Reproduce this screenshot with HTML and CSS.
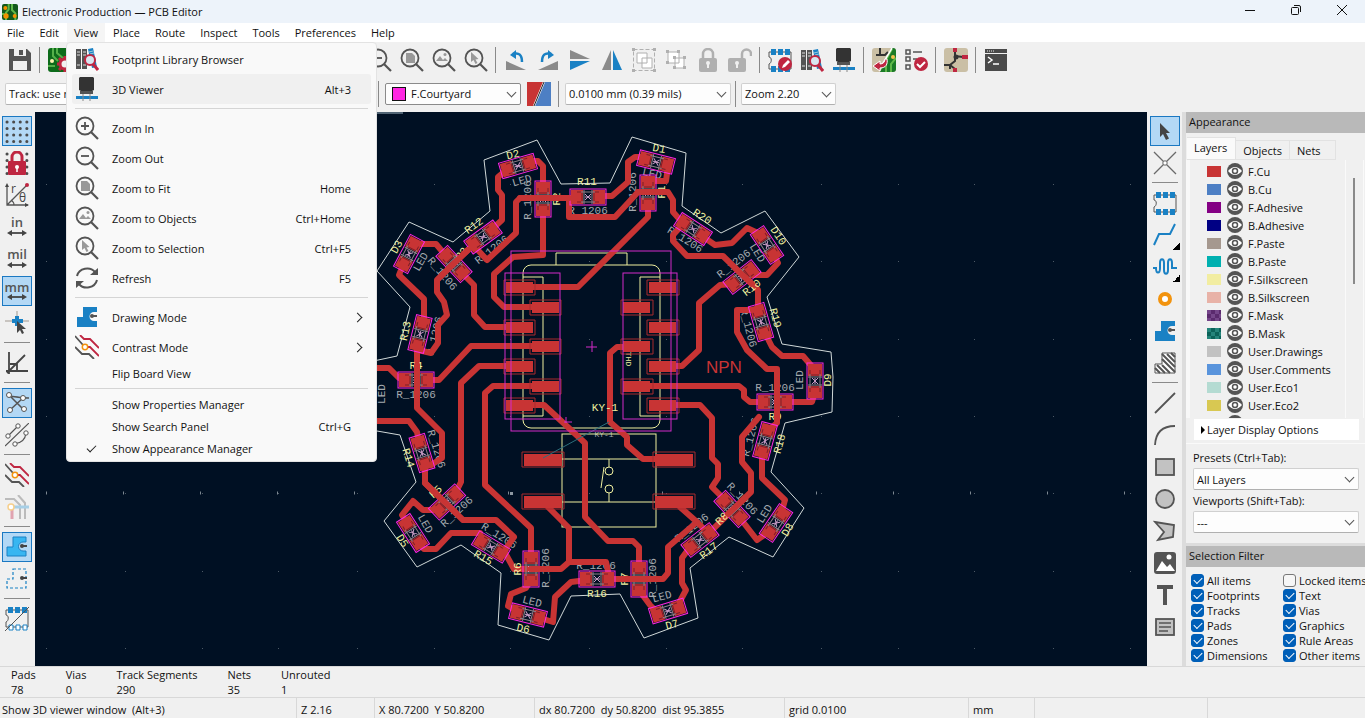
FILE: index.html
```html
<!DOCTYPE html>
<html lang="en">
<head>
  <meta charset="UTF-8" />
  <title>Electronic Production — PCB Editor</title>
  <link rel="stylesheet" href="styles.css">
</head>
<body>
  <!-- icon sprite -->
  <svg class="sprite" aria-hidden="true">
    <symbol id="i-logo" viewBox="0 0 24 24"><rect width="24" height="24" rx="3" fill="#12591c"/><path d="M10 0v8l-4 5v11M15 0v9l5 5v10M0 15h4" fill="none" stroke="#5fb84a" stroke-width="3"/><circle cx="5" cy="6" r="3" fill="#f29100"/><circle cx="6" cy="18" r="4" fill="#f29100"/><circle cx="19" cy="18" r="3" fill="#f29100"/></symbol>
    <symbol id="i-save" viewBox="0 0 24 24"><path d="M1 1h18l4 4v18H1z" fill="#545454"/><path d="M6 1h12v7H6zM5 13h14v9H5z" fill="#f0f0f0"/><path d="M11 2h4v5h-4z" fill="#545454"/></symbol>
    <symbol id="i-setup" viewBox="0 0 24 24"><rect width="24" height="24" rx="3" fill="#0d6b1a"/><path d="M9 0v5l6 5h9M5 0v8l5 5M0 18h7" fill="none" stroke="#54b04a" stroke-width="2"/><circle cx="4" cy="13" r="2" fill="#fff3b0"/><circle cx="17" cy="16" r="5" fill="#f0f0f0" stroke="#bf2641" stroke-width="3"/><path d="M17 8v3M17 21v3M9 16h3M11 10l2 2M11 22l2-2" stroke="#bf2641" stroke-width="3"/></symbol>
    <symbol id="i-page" viewBox="0 0 24 24"><path d="M5 2h10l4 4v16H5z" fill="#fff" stroke="#545454" stroke-width="2"/></symbol>
    <symbol id="i-glass" viewBox="0 0 24 24"><circle cx="10" cy="10" r="8.5" fill="none" stroke="#545454" stroke-width="1.8"/><path d="M16 16l7 7" stroke="#545454" stroke-width="2.2"/></symbol>
    <symbol id="i-zoomin" viewBox="0 0 24 24"><use href="#i-glass"/><path d="M6 10h8M10 6v8" stroke="#545454" stroke-width="1.8"/></symbol>
    <symbol id="i-zoomout" viewBox="0 0 24 24"><use href="#i-glass"/><path d="M6 10h8" stroke="#545454" stroke-width="1.8"/></symbol>
    <symbol id="i-zoomfit" viewBox="0 0 24 24"><use href="#i-glass"/><path d="M6 5h6l3 3v7H6z" fill="#999"/></symbol>
    <symbol id="i-zoomobj" viewBox="0 0 24 24"><use href="#i-glass"/><path d="M4 13l4-5 3 4 2-2 3 3z" fill="#999"/><circle cx="13" cy="6.500" r="1.500" fill="#999"/></symbol>
    <symbol id="i-zoomsel" viewBox="0 0 24 24"><use href="#i-glass"/><path d="M7 4v10l2.500-2 2 4 2-1-2-3.500 3-.5z" fill="#999"/></symbol>
    <symbol id="i-refresh" viewBox="0 0 24 24"><path d="M2 10c2-8 13-10 18-4M22 14c-2 8-13 10-18 4" fill="none" stroke="#545454" stroke-width="2"/><path d="M23 2v7h-8zM1 22v-7h8z" fill="#545454"/></symbol>
    <symbol id="i-rotl" viewBox="0 0 24 24"><path d="M2 13v9h20z" fill="#8a8a8a"/><path d="M9 6c6-2 9 1 9 8" fill="none" stroke="#1a81c4" stroke-width="2.500"/><path d="M6 7l6-5v9z" fill="#1a81c4"/></symbol>
    <symbol id="i-rotr" viewBox="0 0 24 24"><path d="M22 13v9H2z" fill="#8a8a8a"/><path d="M15 6c-6-2-9 1-9 8" fill="none" stroke="#1a81c4" stroke-width="2.500"/><path d="M18 7l-6-5v9z" fill="#1a81c4"/></symbol>
    <symbol id="i-flipv" viewBox="0 0 24 24"><path d="M2 2v9h20z" fill="#8a8a8a"/><path d="M2 22v-9h20z" fill="#1a81c4"/></symbol>
    <symbol id="i-fliph" viewBox="0 0 24 24"><path d="M2 22h9V2z" fill="#8a8a8a"/><path d="M22 22h-9V2z" fill="#1a81c4"/></symbol>
    <symbol id="i-group" viewBox="0 0 24 24"><rect x="1.500" y="1.500" width="21" height="21" fill="none" stroke="#b0b0b0" stroke-dasharray="4 2"/><path d="M0 0h3v3H0zM21 0h3v3h-3zM0 21h3v3H0zM21 21h3v3h-3z" fill="#b0b0b0"/><path d="M5 5h10v10H5zM10 10h10v10H10z" fill="#fff" stroke="#b0b0b0"/></symbol>
    <symbol id="i-ungroup" viewBox="0 0 24 24"><path d="M4 4h11v11H4zM11 10h9v10h-9z" fill="#fff" stroke="#b0b0b0"/><path d="M2 2h3v3H2zM13 2h3v3h-3zM2 13h3v3H2zM9 8h3v3H9zM19 8h3v3h-3zM9 18h3v3H9zM19 18h3v3h-3z" fill="#b0b0b0"/></symbol>
    <symbol id="i-lock" viewBox="0 0 24 24"><path d="M7 12V6a5 5 0 0 1 10 0v6" fill="none" stroke="#b0b0b0" stroke-width="2.500"/><rect x="3" y="10" width="18" height="14" rx="2" fill="#b0b0b0"/><path d="M12 14v6" stroke="#f0f0f0" stroke-width="2"/><circle cx="12" cy="15" r="2" fill="#f0f0f0"/></symbol>
    <symbol id="i-unlock" viewBox="0 0 24 24"><path d="M14 12V6a4 4 0 0 1 9 0v2" fill="none" stroke="#b0b0b0" stroke-width="2.500"/><rect x="0" y="10" width="18" height="14" rx="2" fill="#b0b0b0"/><path d="M9 14v6" stroke="#f0f0f0" stroke-width="2"/><circle cx="9" cy="15" r="2" fill="#f0f0f0"/></symbol>
    <symbol id="i-foot" viewBox="0 0 24 24"><path d="M1 4h22v17H1v-5c3-1 3-7 0-7z" fill="none" stroke="#545454"/><path d="M3 1h5v6H3zM10 1h5v6h-5zM17 1h5v6h-5zM3 18h5v6H3zM10 18h5v6h-5zM17 18h5v6h-5z" fill="#1a81c4"/></symbol>
    <symbol id="i-footedit" viewBox="0 0 24 24"><use href="#i-foot"/><circle cx="17" cy="16" r="7" fill="#bf2641"/><path d="M14 20l1-3 5-5 2 2-5 5z" fill="#fff"/></symbol>
    <symbol id="i-library" viewBox="0 0 24 24"><path d="M1 2h5v20H1zM7 2h5v20H7z" fill="#545454"/><path d="M2 5h3M2 8h3M8 5h3M8 8h3M2 18h3M8 18h3" stroke="#ddd"/><path d="M13 2l5-1 4 19-5 1z" fill="#1a81c4"/><path d="M14 5l4-1M15 7l4-1" stroke="#9cd"/><circle cx="15" cy="13" r="5" fill="#d8e6f0" stroke="#bf2641" stroke-width="2"/><path d="M18 17l5 6" stroke="#bf2641" stroke-width="3"/></symbol>
    <symbol id="i-3d" viewBox="0 0 24 24"><path d="M5 0h13l1 1v12l-2 1H6l-2-1V1z" fill="#333"/><path d="M5 14h13v3H5z" fill="#545454"/><path d="M1 19h22v3H1z" fill="#1a81c4"/><path d="M8 17v7M15 17v7" stroke="#888"/></symbol>
    <symbol id="i-update" viewBox="0 0 24 24"><rect width="24" height="24" rx="3" fill="#cabfa5"/><path d="M20 0h1q3 0 3 3v18q0 3-3 3H8z" fill="#1b7a27"/><path d="M20 1L14 12v12M24 10l-5 6v8" fill="none" stroke="#5fb84a" stroke-width="2"/><path d="M8 0v7M4 7h9l3-3" stroke="#333" stroke-width="2" fill="none"/><path d="M20 0L10 17" stroke="#fff" stroke-width="1.500"/><circle cx="21" cy="9" r="2" fill="#f2c14e"/><path d="M13 11c0 3-2 5-5 5v-3l-7 5 7 5v-3c6 0 8-4 7-9z" fill="#bf2641" stroke="#fff"/></symbol>
    <symbol id="i-drc" viewBox="0 0 24 24"><path d="M2 2h4v4H2zM2 9h4v4H2zM2 17h4v4H2z" fill="none" stroke="#545454" stroke-width="1.500"/><path d="M9 4h9M9 11h4" stroke="#545454" stroke-width="1.500"/><circle cx="17" cy="16" r="7" fill="#bf2641"/><path d="M13 16l3 3 5-5" fill="none" stroke="#fff" stroke-width="2"/></symbol>
    <symbol id="i-sch" viewBox="0 0 24 24"><rect width="24" height="24" rx="3" fill="#cabfa5"/><path d="M11 3v5l8 1M11 8v5l-5 4v4M0 17h6l5 4" stroke="#333" stroke-width="2" fill="none"/><circle cx="12" cy="9" r="2.500" fill="#333"/><path d="M11 0v4M18 9h6M11 20v4" stroke="#bf2641" stroke-width="4"/></symbol>
    <symbol id="i-console" viewBox="0 0 24 24"><path d="M1 1h22v4H1zM1 6h22v17H1z" fill="#4a4a4a"/><path d="M3 3h7" stroke="#eee" stroke-dasharray="1 1"/><path d="M4 9l4 3-4 3M9 16h6" fill="none" stroke="#fff" stroke-width="1.500"/></symbol>
    <symbol id="i-pair" viewBox="0 0 24 24"><path d="M0 0h17L7 24H0z" fill="#c83434"/><path d="M17 0h7v24H7z" fill="#4d7fc4"/><path d="M17 0L7 24" stroke="#fff" stroke-width="2"/><path d="M17 0L7 24" stroke="#222" stroke-width="1"/></symbol>
    <symbol id="i-zone" viewBox="0 0 24 24"><path d="M8 2h14v5h-3a4 4 0 0 0 0 9h3v6H2V12h6z" fill="#1a81c4"/><path d="M16 11h6" stroke="#545454" stroke-width="2"/><circle cx="17" cy="11" r="2" fill="#545454"/></symbol>
    <symbol id="i-zonefill" viewBox="0 0 24 24"><path d="M8 2h13v5h-3a4 4 0 0 0 0 9h3v5H2v-9h6z" fill="#38b6f1" stroke="#1a81c4"/><path d="M16 11h6" stroke="#444" stroke-width="2"/><circle cx="17" cy="11" r="2" fill="#444"/></symbol>
    <symbol id="i-zoneline" viewBox="0 0 24 24"><path d="M8 2h13v19H2v-9h6z" fill="none" stroke="#1a81c4" stroke-width="1.200" stroke-dasharray="3 2"/><path d="M16 11h6" stroke="#444" stroke-width="2"/><circle cx="17" cy="11" r="2" fill="#444"/></symbol>
    <symbol id="i-contrast" viewBox="0 0 24 24"><path d="M0 1l8 9M0 12l7 7h7l5 5" fill="none" stroke="#545454" stroke-width="1.800"/><path d="M5 0l4 4h6l9 9M11 12h4l9 9" fill="none" stroke="#bf2641" stroke-width="1.800"/><circle cx="10" cy="12" r="2.700" fill="#fff" stroke="#f2930e" stroke-width="1.500"/></symbol>
    <symbol id="i-netcolor" viewBox="0 0 24 24"><path d="M0 4h9l6 6v14M13 0l7 8v16" fill="none" stroke="#bbb" stroke-width="2"/><path d="M9 12h15" stroke="#a7cfe6" stroke-width="3"/><path d="M7 14v10" stroke="#e0a3b0" stroke-width="3"/><circle cx="6" cy="12" r="3" fill="#fff" stroke="#f6cf8c" stroke-width="1.500"/></symbol>
    <symbol id="i-grid" viewBox="0 0 24 24"><path d="M2 3h22M2 9.500h22M2 16h22M2 22.500h22" stroke="#4c4c4c" stroke-width="3" stroke-linecap="round" stroke-dasharray="0.100 6.500"/></symbol>
    <symbol id="i-gridlock" viewBox="0 0 24 24"><use href="#i-grid"/><path d="M7 12V6a5 5 0 0 1 10 0v6" fill="#f0f0f0" stroke="#bf2641" stroke-width="3"/><rect x="3" y="10" width="18" height="14" rx="1" fill="#bf2641"/><circle cx="12" cy="16" r="2" fill="#fff"/><path d="M12 16v5" stroke="#fff" stroke-width="1.500"/></symbol>
    <symbol id="i-arrows" viewBox="0 0 24 24"><path d="M4 18h16" stroke="#444" stroke-width="1.800"/><path d="M2 18l5-3v6zM22 18l-5-3v6z" fill="#444"/></symbol>
    <symbol id="i-snap" viewBox="0 0 24 24"><path d="M12 0v8M0 10h24" stroke="#a09890"/><path d="M12 5v10M7 10h11" stroke="#1a81c4" stroke-width="4"/><path d="M12 10v12l3-3 2 4 2-1-2-4h4z" fill="#444"/></symbol>
    <symbol id="i-angle" viewBox="0 0 24 24"><path d="M4 1v22M1 20h22M2 22L20 4M5 13h7v7" fill="none" stroke="#444" stroke-width="1.800"/></symbol>
    <symbol id="i-rats" viewBox="0 0 24 24"><path d="M4 4l14 14M4 5l15 2h5M6 18L18 7" stroke="#545454" stroke-width="1.500"/><g fill="#fff" stroke="#545454"><circle cx="4" cy="4" r="2.500"/><circle cx="18" cy="7" r="2.500"/><circle cx="5" cy="19" r="2.500"/><circle cx="19" cy="18" r="2.500"/></g></symbol>
    <symbol id="i-ratscurve" viewBox="0 0 24 24"><path d="M0 23L24 0M3 13l10-10M9 21q11-1 12-11" fill="none" stroke="#545454" stroke-width="1.200"/><g fill="#fff" stroke="#545454"><circle cx="3" cy="13" r="2.200"/><circle cx="13" cy="3" r="2.200"/><circle cx="10" cy="21" r="2.200"/><circle cx="21" cy="10" r="2.200"/></g></symbol>
    <symbol id="i-padline" viewBox="0 0 24 24"><path d="M1 3h22v17H1v-5c3-1 3-7 0-7z" fill="none" stroke="#545454"/><path d="M3 0h5v6H3zM10 0h5v6h-5zM17 0h5v6h-5z" fill="#1a81c4"/><path d="M4 18h4v5H4zM11 18h4v5h-4zM18 18h4v5h-4z" fill="#fff" stroke="#1a81c4"/><path d="M0 24L24 0" stroke="#545454"/></symbol>
    <symbol id="i-pointer" viewBox="0 0 24 24"><path d="M7 4v14l3-3 3 6 3-1.500-3-5.500h4z" fill="#444"/></symbol>
    <symbol id="i-local" viewBox="0 0 24 24"><path d="M1 1l22 22M23 1L1 23" stroke="#6a6a6a" stroke-width="1.300"/><circle cx="12" cy="12" r="2.200" fill="#fff" stroke="#666"/></symbol>
    <symbol id="i-route" viewBox="0 0 24 24"><path d="M1 22l5-11h11l5-10" fill="none" stroke="#1a81c4" stroke-width="2"/></symbol>
    <symbol id="i-tune" viewBox="0 0 24 24"><path d="M0 13h3c0 6 4 6 4 0V8c0-5 4-5 4 0v7c0 5 4 5 4 0V8c0-5 4-5 4 0v5h5" fill="none" stroke="#1a81c4" stroke-width="2"/></symbol>
    <symbol id="i-via" viewBox="0 0 24 24"><circle cx="12" cy="12" r="5" fill="#fff" stroke="#f2930e" stroke-width="4"/></symbol>
    <symbol id="i-rule" viewBox="0 0 24 24"><path d="M9 2h13v20H2V13h7z" fill="#fff" stroke="#545454"/><path d="M9 3l13 13M9 8l13 13M9 14l8 8M4 14l8 8M2 17l5 5M14 3l8 8M18 2l4 4" stroke="#545454" stroke-width="2"/></symbol>
    <symbol id="i-line" viewBox="0 0 24 24"><path d="M2 22L22 2" stroke="#545454" stroke-width="1.800"/></symbol>
    <symbol id="i-arc" viewBox="0 0 24 24"><path d="M2 22Q3 3 22 3" fill="none" stroke="#545454" stroke-width="1.800"/></symbol>
    <symbol id="i-rect" viewBox="0 0 24 24"><rect x="3" y="4" width="18" height="16" fill="#c2c2c2" stroke="#545454" stroke-width="1.800"/></symbol>
    <symbol id="i-circle" viewBox="0 0 24 24"><circle cx="12" cy="12" r="9" fill="#c2c2c2" stroke="#545454" stroke-width="1.800"/></symbol>
    <symbol id="i-poly" viewBox="0 0 24 24"><path d="M2 3l19 3-1 12-15 3 6-8z" fill="#c2c2c2" stroke="#545454" stroke-width="1.800"/></symbol>
    <symbol id="i-image" viewBox="0 0 24 24"><rect x="1" y="1" width="22" height="22" rx="3" fill="#545454"/><path d="M3 20l6-10 5 6 3-3 5 7z" fill="#fff"/><circle cx="16" cy="6" r="2.500" fill="#fff"/></symbol>
    <symbol id="i-text" viewBox="0 0 24 24"><path d="M4 2h16v4h-6v16h-4V6H4z" fill="#545454"/></symbol>
    <symbol id="i-textbox" viewBox="0 0 24 24"><rect x="3" y="4" width="18" height="16" fill="#c2c2c2" stroke="#545454" stroke-width="1.800"/><path d="M6 8h12M6 12h12M6 16h9" stroke="#545454" stroke-width="1.300"/></symbol>
    <symbol id="i-eye" viewBox="0 0 16 16"><circle cx="8" cy="8" r="8" fill="#545454"/><path d="M1 8q7-8 14 0-7 8-14 0z" fill="#fff"/><circle cx="8" cy="8" r="2.500" fill="#fff" stroke="#545454" stroke-width="1.500"/></symbol>
    <!-- 1206 land pattern -->
    <symbol id="fp" viewBox="-20 -10 40 20" overflow="visible">
      <path d="M-17-7h12V7h-12zM5-7h12V7H5z" fill="#c83434"/>
      <path d="M-11-5h5V5h-5M11-5H6V5h5" fill="none" stroke="#7d1f27"/>
      <path d="M-7-5H7M-7 5H7M-4-7v14M4-7v14" stroke="#8f8288" stroke-width="1" fill="none"/>
      <path d="M-3-3l6 6M-3 3l6-6M-3 0h6" stroke="#c79bc4" stroke-width="1"/>
      <rect x="-18" y="-8" width="36" height="16" fill="none" stroke="#ff26e2"/>
    </symbol>
  </svg>

  <header class="titlebar">
    <svg class="logo"><use href="#i-logo"/></svg>
    <h1>Electronic Production — PCB Editor</h1>
    <div class="window-buttons">
      <button aria-label="Minimize"><svg viewBox="0 0 12 12"><path d="M1 6.500h10"/></svg></button>
      <button aria-label="Restore"><svg viewBox="0 0 12 12"><rect x="1.500" y="3.500" width="7" height="7" rx="1"/><path d="M4 1.500h5q1.500 0 1.500 1.500v5"/></svg></button>
      <button aria-label="Close"><svg viewBox="0 0 12 12"><path d="M1 1l10 10M11 1L1 11"/></svg></button>
    </div>
  </header>

  <nav class="menubar">
    <button>File</button><button>Edit</button>
    <div class="menu-holder">
      <button class="open">View</button>
      <div class="menu">
        <button class="item"><svg><use href="#i-library"/></svg><span>Footprint Library Browser</span></button>
        <button class="item hover"><svg><use href="#i-3d"/></svg><span>3D Viewer</span><kbd>Alt+3</kbd></button>
        <hr>
        <button class="item"><svg><use href="#i-zoomin"/></svg><span>Zoom In</span></button>
        <button class="item"><svg><use href="#i-zoomout"/></svg><span>Zoom Out</span></button>
        <button class="item"><svg><use href="#i-zoomfit"/></svg><span>Zoom to Fit</span><kbd>Home</kbd></button>
        <button class="item"><svg><use href="#i-zoomobj"/></svg><span>Zoom to Objects</span><kbd>Ctrl+Home</kbd></button>
        <button class="item"><svg><use href="#i-zoomsel"/></svg><span>Zoom to Selection</span><kbd>Ctrl+F5</kbd></button>
        <button class="item"><svg><use href="#i-refresh"/></svg><span>Refresh</span><kbd>F5</kbd></button>
        <hr>
        <button class="item sub"><svg><use href="#i-zone"/></svg><span>Drawing Mode</span></button>
        <button class="item sub"><svg><use href="#i-contrast"/></svg><span>Contrast Mode</span></button>
        <button class="item short"><span>Flip Board View</span></button>
        <hr>
        <button class="item short"><span>Show Properties Manager</span></button>
        <button class="item short"><span>Show Search Panel</span><kbd>Ctrl+G</kbd></button>
        <button class="item short checked"><span>Show Appearance Manager</span></button>
      </div>
    </div>
    <button>Place</button><button>Route</button><button>Inspect</button><button>Tools</button><button>Preferences</button><button>Help</button>
  </nav>

  <div class="toolbar">
    <button aria-label="Save"><svg><use href="#i-save"/></svg></button>
    <i class="sep"></i>
    <button aria-label="Board setup"><svg><use href="#i-setup"/></svg></button>
    <i class="sep"></i>
    <button aria-label="Page settings"><svg><use href="#i-page"/></svg></button>
    <button aria-label="Print"><svg><use href="#i-page"/></svg></button>
    <button aria-label="Plot"><svg><use href="#i-page"/></svg></button>
    <i class="sep"></i>
    <button aria-label="Undo"><svg><use href="#i-rotl"/></svg></button>
    <button aria-label="Redo"><svg><use href="#i-rotr"/></svg></button>
    <i class="sep"></i>
    <button aria-label="Find"><svg><use href="#i-glass"/></svg></button>
    <i class="sep"></i>
    <button aria-label="Refresh"><svg><use href="#i-refresh"/></svg></button>
    <button aria-label="Zoom in"><svg><use href="#i-zoomin"/></svg></button>
    <button aria-label="Zoom out"><svg><use href="#i-zoomout"/></svg></button>
    <button aria-label="Zoom to fit"><svg><use href="#i-zoomfit"/></svg></button>
    <button aria-label="Zoom to objects"><svg><use href="#i-zoomobj"/></svg></button>
    <button aria-label="Zoom to selection"><svg><use href="#i-zoomsel"/></svg></button>
    <i class="sep"></i>
    <button aria-label="Rotate left"><svg><use href="#i-rotl"/></svg></button>
    <button aria-label="Rotate right"><svg><use href="#i-rotr"/></svg></button>
    <button aria-label="Mirror vertically"><svg><use href="#i-flipv"/></svg></button>
    <button aria-label="Mirror horizontally"><svg><use href="#i-fliph"/></svg></button>
    <button aria-label="Group"><svg><use href="#i-group"/></svg></button>
    <button aria-label="Ungroup"><svg><use href="#i-ungroup"/></svg></button>
    <button aria-label="Lock"><svg><use href="#i-lock"/></svg></button>
    <button aria-label="Unlock"><svg><use href="#i-unlock"/></svg></button>
    <i class="sep"></i>
    <button aria-label="Footprint editor"><svg><use href="#i-footedit"/></svg></button>
    <button aria-label="Footprint library"><svg><use href="#i-library"/></svg></button>
    <button aria-label="3D viewer"><svg><use href="#i-3d"/></svg></button>
    <i class="sep"></i>
    <button aria-label="Update from schematic"><svg><use href="#i-update"/></svg></button>
    <button aria-label="Design rules checker"><svg><use href="#i-drc"/></svg></button>
    <i class="sep"></i>
    <button aria-label="Schematic editor"><svg><use href="#i-sch"/></svg></button>
    <i class="sep"></i>
    <button aria-label="Scripting console"><svg><use href="#i-console"/></svg></button>
  </div>

  <div class="toolbar options">
    <div class="select track"><select aria-label="Track width"><option>Track: use netclass width</option></select></div>
    <div class="select via"><select aria-label="Via size"><option>Via: use netclass sizes</option></select></div>
    <i class="sep"></i>
    <div class="select layer"><i class="swatch c-court"></i><select aria-label="Active layer"><option>F.Courtyard</option></select></div>
    <button class="pair" aria-label="Layer pair"><svg><use href="#i-pair"/></svg></button>
    <i class="sep"></i>
    <div class="select gridsize"><select aria-label="Grid"><option>0.0100 mm (0.39 mils)</option></select></div>
    <i class="sep"></i>
    <div class="select zoom"><select aria-label="Zoom"><option>Zoom 2.20</option></select></div>
  </div>

  <main class="workspace">
    <div class="tools">
      <button class="on" aria-label="Show grid"><svg><use href="#i-grid"/></svg></button>
      <button aria-label="Grid overrides"><svg><use href="#i-gridlock"/></svg></button>
      <button aria-label="Polar coordinates"><svg viewBox="0 0 24 24"><path d="M2 2v20h21M2 22L22 2M6 17q3 2 3 5" fill="none" stroke="#545454" stroke-width="1.300"/><path d="M0 4l2-4 2 4zM20 20l4 2-4 2z" fill="#444"/><circle cx="22" cy="2" r="2" fill="#bf2641"/><text x="6" y="10" font-size="12" fill="#444">r</text><text x="14" y="19" font-size="12" fill="#444">θ</text></svg></button>
      <button class="unit"><span>in</span><svg><use href="#i-arrows"/></svg></button>
      <button class="unit"><span>mil</span><svg><use href="#i-arrows"/></svg></button>
      <button class="unit on"><span>mm</span><svg><use href="#i-arrows"/></svg></button>
      <button aria-label="Crosshair"><svg><use href="#i-snap"/></svg></button>
      <hr>
      <button aria-label="Limit to 45 degrees"><svg><use href="#i-angle"/></svg></button>
      <hr>
      <button class="on" aria-label="Show ratsnest"><svg><use href="#i-rats"/></svg></button>
      <button aria-label="Curved ratsnest"><svg><use href="#i-ratscurve"/></svg></button>
      <hr>
      <button aria-label="High contrast"><svg><use href="#i-contrast"/></svg></button>
      <button aria-label="Net highlight"><svg><use href="#i-netcolor"/></svg></button>
      <hr>
      <button class="on" aria-label="Filled zones"><svg><use href="#i-zonefill"/></svg></button>
      <button aria-label="Zone outlines"><svg><use href="#i-zoneline"/></svg></button>
      <hr>
      <button aria-label="Sketch pads"><svg><use href="#i-padline"/></svg></button>
    </div>

    <svg class="board" viewBox="35 112 1112 554" preserveAspectRatio="xMinYMin slice">
      <defs>
        <pattern id="dots" x="46" y="184" width="232" height="232" patternUnits="userSpaceOnUse">
          <path d="M0 0h1v1H0zM79 0h1v1h-1zM156 0h1v1h-1zM0 77h1v1H0zM79 77h1v1h-1zM156 77h1v1h-1zM0 155h1v1H0zM79 155h1v1h-1zM156 155h1v1h-1z" fill="#4d5a66"/>
        </pattern>
      </defs>
      <rect x="35" y="112" width="1112" height="554" fill="#001023"/>
      <rect x="35" y="112" width="1112" height="554" fill="url(#dots)"/>
      <path d="M46 493h1110" stroke="#7d8892" stroke-width="3" stroke-dasharray="1 76"/>
      <path d="M510 492h3v3h-3z" fill="#8d98a2"/>
      <path d="M377 113h26" stroke="#9fb6c4"/>

      <path class="edge" d="M377 271L409 222L453 242L490 211L484 160L537 140L561 184L610 183L632 137L686 153L682 206L721 233L765 211L799 257L767 297L782 344L831 352L833 377L832 412L785 423L771 472L804 508L773 557L729 537L690 568L698 618L644 638L620 594L571 596L549 640L498 625L501 573L461 545L417 567L384 521L416 482L400 435L377 431L348 424L350 366L397 356L410 307Z"/>

      <!-- fab values -->
      <g class="fab">
        <text transform="translate(522 181) rotate(-16)">LED</text>
        <text transform="translate(528 200) rotate(-90)">R_1206</text>
        <text transform="translate(588 211)">R_1206</text>
        <text transform="translate(492 250) rotate(-38)">R_1206</text>
        <text transform="translate(442 274) rotate(50)">R_1206</text>
        <text transform="translate(421 262) rotate(-60)">LED</text>
        <text transform="translate(435 336) rotate(-76)">R_1206</text>
        <text transform="translate(416 395)">R_1206</text>
        <text transform="translate(436 449) rotate(73)">R_1206</text>
        <text transform="translate(457 512) rotate(-43)">R_1206</text>
        <text transform="translate(425 524) rotate(60)">LED</text>
        <text transform="translate(499 536) rotate(32)">R_1206</text>
        <text transform="translate(546 568) rotate(-90)">R_1206</text>
        <text transform="translate(532 602) rotate(14)">LED</text>
        <text transform="translate(596 566)">R_1206</text>
        <text transform="translate(653 578) rotate(-90)">R_1206</text>
        <text transform="translate(662 597) rotate(-15)">LED</text>
        <text transform="translate(692 528) rotate(-38)">R_1206</text>
        <text transform="translate(742 499) rotate(47)">R_1206</text>
        <text transform="translate(765 514) rotate(-58)">LED</text>
        <text transform="translate(751 437) rotate(-75)">R_1206</text>
        <text transform="translate(775 388)">R_1206</text>
        <text transform="translate(800 380) rotate(-90)">LED</text>
        <text transform="translate(748 328) rotate(75)">R_1206</text>
        <text transform="translate(734 264) rotate(-38)">R_1206</text>
        <text transform="translate(757 253) rotate(58)">LED</text>
        <text transform="translate(685 240) rotate(32)">R_1206</text>
        <text transform="translate(652 174) rotate(13)">LED</text>
        <text transform="translate(633 192) rotate(-90)">R_1206</text>
        <text transform="translate(382 394) rotate(-90)">LED</text>
        <text class="small" transform="translate(604 434)">KY-1</text>
      </g>

      <!-- silkscreen -->
      <g class="silk">
        <rect x="523" y="265" width="137" height="163" rx="8"/>
        <path d="M556 265v-12h71v12M523 277h20v139h-20M660 277h-20v139h20"/>
        <rect x="562" y="434" width="94" height="93"/>
        <path d="M562 459h94M562 502h94M609 459v8M609 493v9M604 467l-3 21"/>
        <circle cx="609" cy="471" r="4"/><circle cx="609" cy="489" r="4"/>
      </g>

      <!-- copper tracks -->
      <g class="copper">
        <path d="M530 161H538L543 166V187M504 172L498 177V190L502 195V220L490 231"/>
        <path d="M476 248L487 260L516 233V202L520 198H576M569 198V217H615L628 203L638 192H668L673 200V212L682 222"/>
        <path d="M600 196H612L628 182V162L635 157H645M668 166L666 181H648"/>
        <path d="M648 207V217L578 287H519M543 211V255L513 257L494 274V297L504 307H546"/>
        <path d="M473 245L437 280V292L444 302L447 315L438 325V343L431 353L418 350M415 244H436L447 257"/>
        <path d="M462 273L474 285V315L485 327H519M403 265L399 275L424 299V322"/>
        <path d="M417 345V408L442 433V458L431 465M376 368H389L399 378H405M427 380H439L471 346H546"/>
        <path d="M519 366H479L461 383V482L455 494M546 386H493L485 393V485L531 528V558"/>
        <path d="M519 405H544L585 443V517L608 541H633L639 547V568M376 421H409L417 432L419 442"/>
        <path d="M425 463V483L463 520H496L514 537L504 551L514 569H561L569 562V528L548 507M569 562H606L609 575"/>
        <path d="M407 523L402 515L413 501L423 510H438M419 543L424 549H436L451 533H480"/>
        <path d="M531 580L526 588L511 594L508 606L517 611M540 618L553 622L555 597L571 582L587 580"/>
        <path d="M607 579H663L668 573V547L697 522L680 507M637 347H617L610 353V422L627 437V445L643 459H675"/>
        <path d="M637 386H739L744 390V397L750 402H765M663 405H700L712 418V458L718 464V478L712 487L724 499"/>
        <path d="M785 402H812L815 392M684 223L673 235V241L687 256H723L758 290V310"/>
        <path d="M702 236L715 245L732 243L747 228L760 234M774 255L778 263L767 275H752M733 284L720 285L699 303V350L682 366H663"/>
        <path d="M757 310H737V332L747 350L767 369H777V423L768 430M765 333L772 347L782 356H803L815 370"/>
        <path d="M759 417L742 437V462L751 473V492L710 532M762 450V478L785 500L781 514M770 531L757 540L740 518"/>
        <path d="M690 547L682 558V583L686 590L678 605M639 590L650 605L658 613M697 522L708 533"/>
      </g>
      <text class="npn" x="706" y="373">NPN</text>

      <!-- reference designators -->
      <g class="ref">
        <text transform="translate(513 155) rotate(-14)">D2</text>
        <text transform="translate(557 199) rotate(-90)">R2</text>
        <text transform="translate(587 182)">R11</text>
        <text transform="translate(474 226) rotate(-36)">R12</text>
        <text transform="translate(462 254) rotate(-50)">R3</text>
        <text transform="translate(397 247) rotate(-62)">D3</text>
        <text transform="translate(406 331) rotate(-78)">R13</text>
        <text transform="translate(416 366)">R4</text>
        <text transform="translate(408 458) rotate(73)">R14</text>
        <text transform="translate(436 492) rotate(-43)">R5</text>
        <text transform="translate(402 541) rotate(58)">D5</text>
        <text transform="translate(483 558) rotate(30)">R15</text>
        <text transform="translate(518 569) rotate(-90)">R6</text>
        <text transform="translate(523 629) rotate(12)">D6</text>
        <text transform="translate(597 594)">R16</text>
        <text transform="translate(625 579) rotate(-90)">R7</text>
        <text transform="translate(672 625) rotate(-15)">D7</text>
        <text transform="translate(709 551) rotate(-38)">R17</text>
        <text transform="translate(722 519) rotate(-45)">R8</text>
        <text transform="translate(788 530) rotate(-58)">D8</text>
        <text transform="translate(780 444) rotate(-75)">R18</text>
        <text transform="translate(775 417)">R9</text>
        <text transform="translate(828 380) rotate(-90)">D9</text>
        <text transform="translate(775 318) rotate(75)">R19</text>
        <text transform="translate(752 288) rotate(-38)">R10</text>
        <text transform="translate(778 236) rotate(56)">D10</text>
        <text transform="translate(702 217) rotate(32)">R20</text>
        <text transform="translate(659 149) rotate(10)">D1</text>
        <text transform="translate(662 192) rotate(-90)">R1</text>
        <text transform="translate(605 408)">KY-1</text>
        <text class="small" transform="translate(628 359) rotate(90)">THD</text>
      </g>

      <g class="pads">
        <path d="M506 282h27v11h-27zM532 302h27v11h-27zM506 322h27v11h-27zM532 341h27v11h-27zM506 361h27v11h-27zM532 381h27v11h-27zM506 400h27v11h-27z"/>
        <path d="M649 282h27v11h-27zM623 302h27v11h-27zM649 322h27v11h-27zM623 341h27v11h-27zM649 361h27v11h-27zM623 381h27v11h-27zM649 400h27v11h-27z"/>
        <path d="M524 454h38v12h-38zM524 496h38v12h-38zM655 454h38v12h-38zM655 496h38v12h-38z"/>
        <path class="mask" d="M504 280h31v15h-31zM530 300h31v15h-31zM504 320h31v15h-31zM530 339h31v15h-31zM504 359h31v15h-31zM530 379h31v15h-31zM504 398h31v15h-31zM647 280h32v15h-32zM621 300h32v15h-32zM647 320h32v15h-32zM621 339h32v15h-32zM647 359h32v15h-32zM621 379h32v15h-32zM647 398h32v15h-32zM522 452h42v15h-42zM522 494h42v15h-42zM653 452h42v15h-42zM653 494h42v15h-42z"/>
      </g>

      <g>
        <use href="#fp" x="-20" y="-10" width="40" height="20" transform="translate(518 166) rotate(-16)"/>
        <use href="#fp" x="-20" y="-10" width="40" height="20" transform="translate(543 199) rotate(90)"/>
        <use href="#fp" x="-20" y="-10" width="40" height="20" transform="translate(588 197)"/>
        <use href="#fp" x="-20" y="-10" width="40" height="20" transform="translate(483 237) rotate(-36)"/>
        <use href="#fp" x="-20" y="-10" width="40" height="20" transform="translate(454 264) rotate(47)"/>
        <use href="#fp" x="-20" y="-10" width="40" height="20" transform="translate(409 254) rotate(118)"/>
        <use href="#fp" x="-20" y="-10" width="40" height="20" transform="translate(420 334) rotate(104)"/>
        <use href="#fp" x="-20" y="-10" width="40" height="20" transform="translate(416 380)"/>
        <use href="#fp" x="-20" y="-10" width="40" height="20" transform="translate(422 453) rotate(73)"/>
        <use href="#fp" x="-20" y="-10" width="40" height="20" transform="translate(447 502) rotate(-43)"/>
        <use href="#fp" x="-20" y="-10" width="40" height="20" transform="translate(413 533) rotate(57)"/>
        <use href="#fp" x="-20" y="-10" width="40" height="20" transform="translate(491 547) rotate(31)"/>
        <use href="#fp" x="-20" y="-10" width="40" height="20" transform="translate(531 569) rotate(90)"/>
        <use href="#fp" x="-20" y="-10" width="40" height="20" transform="translate(528 615) rotate(14)"/>
        <use href="#fp" x="-20" y="-10" width="40" height="20" transform="translate(597 579)"/>
        <use href="#fp" x="-20" y="-10" width="40" height="20" transform="translate(639 579) rotate(90)"/>
        <use href="#fp" x="-20" y="-10" width="40" height="20" transform="translate(668 611) rotate(-17)"/>
        <use href="#fp" x="-20" y="-10" width="40" height="20" transform="translate(700 540) rotate(-38)"/>
        <use href="#fp" x="-20" y="-10" width="40" height="20" transform="translate(732 509) rotate(47)"/>
        <use href="#fp" x="-20" y="-10" width="40" height="20" transform="translate(776 523) rotate(124)"/>
        <use href="#fp" x="-20" y="-10" width="40" height="20" transform="translate(765 441) rotate(105)"/>
        <use href="#fp" x="-20" y="-10" width="40" height="20" transform="translate(775 402)"/>
        <use href="#fp" x="-20" y="-10" width="40" height="20" transform="translate(815 381) rotate(90)"/>
        <use href="#fp" x="-20" y="-10" width="40" height="20" transform="translate(761 322) rotate(74)"/>
        <use href="#fp" x="-20" y="-10" width="40" height="20" transform="translate(742 277) rotate(-38)"/>
        <use href="#fp" x="-20" y="-10" width="40" height="20" transform="translate(767 245) rotate(56)"/>
        <use href="#fp" x="-20" y="-10" width="40" height="20" transform="translate(693 229) rotate(33)"/>
        <use href="#fp" x="-20" y="-10" width="40" height="20" transform="translate(656 162) rotate(14)"/>
        <use href="#fp" x="-20" y="-10" width="40" height="20" transform="translate(648 193) rotate(90)"/>
      </g>
      <!-- tracks that cross a resistor body -->
      <g class="copper">
        <path d="M520 198H569M638 192H664M417 365V400M448 269L468 250M425 483L456 513M531 569H550M620 579H660M777 380V420M728 514L745 498M735 268L752 284"/>
      </g>

      <path d="M543 458L609 422" stroke="#2c6f7c"/>
      <g class="court">
        <rect x="511" y="251" width="160" height="180"/>
        <rect x="505" y="273" width="55" height="146"/>
        <rect x="623" y="273" width="54" height="146"/>
        <path d="M592 341v11M586 347h11M566 417v6M564 422h8"/>
      </g>
    </svg>

    <div class="tools right">
      <button class="on" aria-label="Select"><svg><use href="#i-pointer"/></svg></button>
      <button aria-label="Local ratsnest"><svg><use href="#i-local"/></svg></button>
      <hr>
      <button aria-label="Add footprint"><svg><use href="#i-foot"/></svg></button>
      <button class="more" aria-label="Route tracks"><svg><use href="#i-route"/></svg></button>
      <button class="more" aria-label="Tune length"><svg><use href="#i-tune"/></svg></button>
      <button aria-label="Add via"><svg><use href="#i-via"/></svg></button>
      <button aria-label="Add zone"><svg><use href="#i-zone"/></svg></button>
      <button aria-label="Add rule area"><svg><use href="#i-rule"/></svg></button>
      <hr>
      <button aria-label="Draw line"><svg><use href="#i-line"/></svg></button>
      <button aria-label="Draw arc"><svg><use href="#i-arc"/></svg></button>
      <button aria-label="Draw rectangle"><svg><use href="#i-rect"/></svg></button>
      <button aria-label="Draw circle"><svg><use href="#i-circle"/></svg></button>
      <button aria-label="Draw polygon"><svg><use href="#i-poly"/></svg></button>
      <button aria-label="Add image"><svg><use href="#i-image"/></svg></button>
      <button aria-label="Add text"><svg><use href="#i-text"/></svg></button>
      <button aria-label="Add text box"><svg><use href="#i-textbox"/></svg></button>
    </div>

    <aside class="side">
      <h2>Appearance</h2>
      <div class="tabs">
        <button class="active">Layers</button><button>Objects</button><button>Nets</button>
      </div>
      <div class="layers">
        <ul>
          <li><i class="c-fcu"></i><svg><use href="#i-eye"/></svg>F.Cu</li>
          <li><i class="c-bcu"></i><svg><use href="#i-eye"/></svg>B.Cu</li>
          <li><i class="c-fadh"></i><svg><use href="#i-eye"/></svg>F.Adhesive</li>
          <li><i class="c-badh"></i><svg><use href="#i-eye"/></svg>B.Adhesive</li>
          <li><i class="c-fpaste"></i><svg><use href="#i-eye"/></svg>F.Paste</li>
          <li><i class="c-bpaste"></i><svg><use href="#i-eye"/></svg>B.Paste</li>
          <li><i class="c-fsilk"></i><svg><use href="#i-eye"/></svg>F.Silkscreen</li>
          <li><i class="c-bsilk"></i><svg><use href="#i-eye"/></svg>B.Silkscreen</li>
          <li><i class="c-fmask"></i><svg><use href="#i-eye"/></svg>F.Mask</li>
          <li><i class="c-bmask"></i><svg><use href="#i-eye"/></svg>B.Mask</li>
          <li><i class="c-draw"></i><svg><use href="#i-eye"/></svg>User.Drawings</li>
          <li><i class="c-comm"></i><svg><use href="#i-eye"/></svg>User.Comments</li>
          <li><i class="c-eco1"></i><svg><use href="#i-eye"/></svg>User.Eco1</li>
          <li><i class="c-eco2"></i><svg><use href="#i-eye"/></svg>User.Eco2</li>
          <li><i></i><svg><use href="#i-eye"/></svg></li>
        </ul>
        <div class="scroll"><i></i></div>
      </div>
      <button class="display-options">Layer Display Options</button>
      <div class="presets">
        <label for="presets">Presets (Ctrl+Tab):</label>
        <div class="select"><select id="presets"><option>All Layers</option></select></div>
        <label for="viewports">Viewports (Shift+Tab):</label>
        <div class="select"><select id="viewports"><option>---</option></select></div>
      </div>
      <h2 class="filter-title">Selection Filter</h2>
      <div class="filter">
        <label><input type="checkbox" checked>All items</label>
        <label><input type="checkbox">Locked items</label>
        <label><input type="checkbox" checked>Footprints</label>
        <label><input type="checkbox" checked>Text</label>
        <label><input type="checkbox" checked>Tracks</label>
        <label><input type="checkbox" checked>Vias</label>
        <label><input type="checkbox" checked>Pads</label>
        <label><input type="checkbox" checked>Graphics</label>
        <label><input type="checkbox" checked>Zones</label>
        <label><input type="checkbox" checked>Rule Areas</label>
        <label><input type="checkbox" checked>Dimensions</label>
        <label><input type="checkbox" checked>Other items</label>
      </div>
    </aside>
  </main>

  <dl class="info">
    <div><dt>Pads</dt><dd>78</dd></div>
    <div><dt>Vias</dt><dd>0</dd></div>
    <div><dt>Track Segments</dt><dd>290</dd></div>
    <div><dt>Nets</dt><dd>35</dd></div>
    <div><dt>Unrouted</dt><dd>1</dd></div>
  </dl>
  <footer class="status">
    <span class="s-msg">Show 3D viewer window&nbsp; (Alt+3)</span>
    <span class="s-z">Z 2.16</span>
    <span class="s-xy">X 80.7200&nbsp; Y 50.8200</span>
    <span class="s-d">dx 80.7200&nbsp; dy 50.8200&nbsp; dist 95.3855</span>
    <span class="s-grid">grid 0.0100</span>
    <span class="s-unit">mm</span>
    <span class="s-a"></span>
    <span class="s-b"></span>
  </footer>
</body>
</html>
```
FILE: styles.css
```css
* {
  box-sizing: border-box;
}

body {
  margin: 0;
  height: 100vh;
  display: flex;
  flex-direction: column;
  overflow: hidden;
  background: #f0f0f0;
  color: #111;
  font-family: "Open Sans", "Noto Sans", sans-serif;
  font-size: 11px;
  line-height: 15px;
}

button, select, input, kbd {
  font: inherit;
  color: inherit;
}

button {
  border: none;
  background: none;
  padding: 0;
  white-space: nowrap;
}

hr {
  border: none;
  margin: 0;
}

.sprite {
  position: absolute;
  width: 0;
  height: 0;
}

/* title bar */
.titlebar {
  display: flex;
  align-items: center;
  height: 23px;
  flex: none;
  padding-left: 2px;
  background: #edf3fa;
}

.logo {
  width: 16px;
  height: 16px;
}

.titlebar h1 {
  flex: 1;
  margin: 0 0 0 4px;
  font-size: 11px;
  font-weight: normal;
}

.window-buttons {
  display: flex;
}

.window-buttons button {
  width: 46px;
  height: 20px;
}

.window-buttons svg {
  width: 12px;
  height: 12px;
  fill: none;
  stroke: #111;
}

/* menu bar */
.menubar {
  display: flex;
  flex: none;
  gap: 1px;
  height: 19px;
  background: #fff;
}

.menubar > button,
.menu-holder > button {
  height: 19px;
  padding: 0 7px;
}

.menubar .open {
  background: #f5f5f5;
}

.menu-holder {
  position: relative;
}

.menu {
  position: absolute;
  z-index: 5;
  top: 19px;
  left: -1px;
  width: 311px;
  padding: 1px 5px 2px;
  background: #f9f9f9;
  border: 1px solid #e3e3e3;
  border-radius: 4px;
}

.menu hr {
  height: 9px;
  margin: 0 3px;
  background: linear-gradient(#d5d5d5, #d5d5d5) center / 100% 1px no-repeat;
}

.item {
  position: relative;
  display: flex;
  align-items: center;
  width: 100%;
  height: 30px;
  padding: 0 20px 0 3px;
  border-radius: 3px;
  text-align: left;
}

.item.hover {
  background: #f0f0f0;
}

.item svg {
  width: 24px;
  height: 24px;
  margin-right: 13px;
}

.item span {
  flex: 1;
}

.item.short {
  height: 22px;
  padding-left: 40px;
}

.item.sub::after {
  content: "";
  width: 6px;
  height: 6px;
  margin-right: -10px;
  border: solid #222;
  border-width: 1px 1px 0 0;
  transform: rotate(45deg);
}

.item.checked::before {
  content: "";
  position: absolute;
  left: 15px;
  top: 8px;
  width: 8px;
  height: 4px;
  border: solid #222;
  border-width: 0 0 1px 1px;
  transform: rotate(-45deg);
}

/* toolbars */
.toolbar {
  display: flex;
  align-items: center;
  flex: none;
  height: 36px;
  padding-left: 4px;
}

.toolbar button {
  display: flex;
  align-items: center;
  justify-content: center;
  width: 32px;
  height: 32px;
}

.toolbar svg {
  width: 24px;
  height: 24px;
}

.sep {
  width: 8px;
  height: 26px;
  background: linear-gradient(#8a8a8a, #8a8a8a) 3px 0 / 1px 100% no-repeat;
}

.options {
  height: 34px;
  padding-bottom: 3px;
}

.select {
  position: relative;
}

.select select {
  display: block;
  width: 100%;
  height: 22px;
  padding: 0 3px;
  appearance: none;
  background: #fdfdfd;
  border: 1px solid #d0d0d0;
  border-bottom-color: #b0b0b0;
  border-radius: 2px;
}

.select::after {
  content: "";
  position: absolute;
  right: 6px;
  top: 6px;
  width: 6px;
  height: 6px;
  border: solid #555;
  border-width: 0 1px 1px 0;
  transform: rotate(45deg);
  pointer-events: none;
}

.track {
  width: 185px;
  margin-left: 1px;
}

.via {
  width: 180px;
  margin-left: 5px;
}

.layer {
  width: 136px;
  margin: 0 2px;
}

.layer select {
  padding-left: 25px;
  border-color: #8a8a8a;
}

.swatch {
  position: absolute;
  left: 7px;
  top: 4px;
  width: 14px;
  height: 14px;
  border: 1px solid #111;
}

.gridsize {
  width: 166px;
  margin: 0 1px 0 2px;
}

.zoom {
  width: 95px;
  margin-left: 1px;
}

/* workspace */
.workspace {
  display: flex;
  flex: 1;
  min-height: 0;
}

.tools {
  flex: none;
  width: 35px;
  padding: 4px 3px 0 2px;
}

.tools.right {
  width: 39px;
  padding-left: 3px;
  padding-right: 2px;
  border-right: 4px solid #dcdcdc;
}

.tools button {
  position: relative;
  display: flex;
  align-items: center;
  justify-content: center;
  width: 30px;
  height: 30px;
  margin-bottom: 2px;
}

.tools .on {
  background: #b3d8f5;
  border: 1px solid #1a78c2;
}

.tools svg {
  width: 24px;
  height: 24px;
}

.tools hr {
  height: 8px;
  margin-left: 2px;
  width: 26px;
  background: linear-gradient(#8a8a8a, #8a8a8a) 0 2px / 100% 1px no-repeat;
}

.unit span {
  position: absolute;
  left: 0;
  right: 0;
  top: 3px;
  text-align: center;
  font-size: 13px;
  font-weight: 600;
  line-height: 14px;
  color: #555;
}

.more::after {
  content: "";
  position: absolute;
  right: 0;
  bottom: 0;
  width: 7px;
  height: 7px;
  background: linear-gradient(135deg, transparent 50%, #000 50%);
}

.board {
  flex: 1;
  min-width: 0;
  height: 100%;
  background: #001023;
}

.board text {
  font-family: "Liberation Mono", monospace;
  font-size: 11px;
  text-anchor: middle;
  dominant-baseline: central;
}

.board .small {
  font-size: 8px;
}

.board .npn {
  font-family: "Liberation Sans", sans-serif;
  font-size: 17px;
  text-anchor: start;
  dominant-baseline: auto;
  fill: #c83434;
}

.edge {
  fill: none;
  stroke: #d0d8d8;
}

.fab text {
  fill: #a4a9ae;
}

.silk {
  fill: none;
  stroke: #f0f0a0;
}

.ref text {
  fill: #f0f0a0;
}

.copper {
  fill: none;
  stroke: #c83434;
  stroke-width: 6;
  stroke-linecap: round;
  stroke-linejoin: round;
}

.pads {
  fill: #c83434;
}

.mask {
  fill: none;
  stroke: #a82b2e;
}

.court {
  fill: none;
  stroke: #d32bc9;
}

/* side panel */
.side {
  display: flex;
  flex-direction: column;
  flex: none;
  width: 179px;
}

.side h2 {
  flex: none;
  height: 21px;
  margin: 0;
  padding-left: 3px;
  background: #b9b9b9;
  font-size: 11px;
  font-weight: normal;
  line-height: 19px;
}

.tabs {
  display: flex;
  flex: none;
  align-items: flex-end;
  height: 27px;
  padding-left: 1px;
}

.tabs button {
  height: 20px;
  padding: 0 7px;
  border: 1px solid #e2e2e2;
  border-left: none;
}

.tabs button:last-child {
  padding-right: 14px;
}

.tabs .active {
  height: 23px;
  padding: 0 8px 2px 7px;
  background: #fafafa;
}

.layers {
  display: flex;
  flex: none;
  height: 258px;
  overflow: hidden;
  border-left: 4px solid #f8f8f8;
}

.layers ul {
  flex: 1;
  margin: 0;
  padding: 2px 0 0 17px;
  list-style: none;
  border-right: 1px solid #fafafa;
}

.layers li {
  display: flex;
  align-items: center;
  height: 18px;
}

.layers li i {
  width: 14px;
  height: 11px;
  margin-right: 6px;
}

.layers li svg {
  width: 16px;
  height: 16px;
  margin-right: 5px;
}

.scroll {
  width: 18px;
  margin-right: 1px;
  border-right: 1px solid #fafafa;
}

.scroll i {
  display: block;
  width: 2px;
  height: 106px;
  margin: 18px 0 0 7px;
  background: #8a8a8a;
}

.c-court { background: #ff26e2; }
.c-fcu { background: #c83434; }
.c-bcu { background: #4d7fc4; }
.c-fadh { background: #840084; }
.c-badh { background: #000084; }
.c-fpaste { background: #a5988f; }
.c-bpaste { background: #00b0b0; }
.c-fsilk { background: #f2eda1; }
.c-bsilk { background: #e8b2a7; }
.c-fmask { background: repeating-conic-gradient(#5b2a6e 0 25%, #75468a 0 50%) 0 0 / 8px 8px; }
.c-bmask { background: repeating-conic-gradient(#0b6359 0 25%, #25857b 0 50%) 0 0 / 8px 8px; }
.c-draw { background: #c2c2c2; }
.c-comm { background: #5994dc; }
.c-eco1 { background: #b4dbd2; }
.c-eco2 { background: #d8c852; }

.display-options {
  flex: none;
  height: 21px;
  margin: 1px 6px 3px 8px;
  padding-left: 7px;
  background: #fff;
  text-align: left;
}

.display-options::before {
  content: "";
  display: inline-block;
  margin-right: 2px;
  border: solid transparent;
  border-width: 4px 0 4px 4px;
  border-left-color: #000;
}

.presets {
  display: flex;
  flex-direction: column;
  padding: 6px 6px 7px 7px;
  border-top: 1px solid #fafafa;
}

.presets label {
  height: 18px;
}

.presets .select {
  margin-bottom: 3px;
}

.side .filter-title {
  height: 24px;
  border-top: 3px solid #dcdcdc;
}

.filter {
  display: grid;
  grid-template-columns: 92px 1fr;
  padding: 6px 0 0 5px;
}

.filter label {
  display: flex;
  align-items: center;
  height: 15px;
  white-space: nowrap;
}

.filter input {
  position: relative;
  appearance: none;
  flex: none;
  width: 13px;
  height: 13px;
  margin: 0 3px 0 0;
  background: #f6f6f6;
  border: 1px solid #777;
  border-radius: 3px;
}

.filter input:checked {
  background: #005fb8;
  border-color: #005fb8;
}

.filter input:checked::after {
  content: "";
  position: absolute;
  left: 2px;
  top: 2px;
  width: 7px;
  height: 4px;
  border: solid #fff;
  border-width: 0 0 1px 1px;
  transform: rotate(-45deg);
}

/* bottom bars */
.info {
  display: flex;
  flex: none;
  gap: 30px;
  height: 31px;
  margin: 0;
  padding: 0 11px;
  border-top: 1px solid #d8d8d8;
}

.info dd {
  margin: 0;
}

.status {
  display: flex;
  flex: none;
  height: 21px;
  border-top: 1px solid #d8d8d8;
}

.status span {
  padding: 4px 0 0 4px;
  border-right: 1px solid #d8d8d8;
  white-space: nowrap;
}

.status .s-msg { width: 297px; padding-left: 2px; }
.status .s-z { width: 78px; }
.status .s-xy { width: 160px; }
.status .s-d { width: 250px; }
.status .s-grid { width: 184px; }
.status .s-unit { width: 66px; }
.status .s-a { width: 173px; }
.status .s-b { flex: 1; border-right: none; }
```
